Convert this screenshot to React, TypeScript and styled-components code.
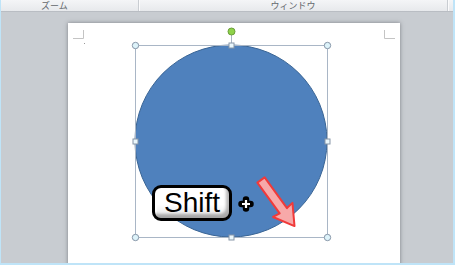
import React, { FC } from 'react';
import styled, { createGlobalStyle } from 'styled-components';

const GlobalStyle = createGlobalStyle`
  body {
    margin: 0;
    font-family: "Liberation Sans", "Noto Sans CJK JP", sans-serif;
  }
`;

const SFrame = styled.div`
  display: flex;
  flex-direction: column;
  width: 455px;
  height: 265px;
  padding: 0 2px 2px 1px;
  box-sizing: border-box;
  background: #bfe4f8;
  overflow: hidden;
`;

const STabBar = styled.div`
  display: flex;
  flex: 0 0 12px;
  height: 12px;
  background: linear-gradient(#f4f5f7, #e7e9ec);
  border-bottom: 1px solid #b9bdc3;
  box-sizing: border-box;
`;

const SGroup = styled.div<{ width: number; padLeft?: number }>`
  display: flex;
  align-items: center;
  justify-content: ${({ padLeft }) => (padLeft ? 'flex-start' : 'center')};
  width: ${({ width }) => width}px;
  padding-left: ${({ padLeft }) => padLeft || 0}px;
  box-sizing: border-box;
  border-right: 1px solid #c9cdd2;
  box-shadow: 1px 0 0 #fbfbfc;

  font-family: "Noto Sans CJK JP", sans-serif;
  font-size: 9px;
  line-height: 11px;
  color: #63676d;
`;

const SWorkspace = styled.div`
  flex: 1;
  padding: 11px 0 0 67px;
  background: #c8ccd1;
  overflow: hidden;
`;

const SSlide = styled.div`
  position: relative;
  width: 332px;
  height: 262px;
  background: #fff;
  box-shadow: 0 0 4px rgba(60, 64, 70, 0.55);

  > svg {
    display: block;
  }
`;

const SKey = styled.div`
  position: absolute;
  left: 84px;
  top: 162px;
  display: flex;
  align-items: center;
  justify-content: center;
  width: 80px;
  height: 36px;
  box-sizing: border-box;

  border: 3px solid #000;
  border-radius: 9px;
  background: linear-gradient(#ffffff 55%, #e4e4e4);
  box-shadow: inset -3px -4px 3px rgba(0, 0, 0, 0.28), inset 2px 2px 1px #fff;

  font-family: "Liberation Sans", Arial, sans-serif;
  font-size: 28px;
  line-height: 1;
  color: #000;
  padding-bottom: 1px;
`;

const corners: [number, number][] = [[67, 22], [259, 22], [67, 214], [259, 214]];
const sides: [number, number][] = [[163, 22], [163, 214], [67, 118], [259, 118]];

const Canvas: FC = () => (
  <svg width='332' height='262' viewBox='0 0 332 262'>
    {/* layout guides */}
    <path d='M5 15.5 H15.5 V7' fill='none' stroke='#c4c4c4' />
    <path d='M327 15.5 H316.5 V7' fill='none' stroke='#c4c4c4' />
    <rect x='16' y='20' width='1' height='1' fill='#999' />

    <circle cx='163' cy='118' r='96' fill='#4f81bd' stroke='#3a6595' strokeWidth='1' />

    {/* selection */}
    <rect x='67.5' y='22.5' width='192' height='192' fill='none' stroke='#a9b6c6' />
    <line x1='163.5' y1='11' x2='163.5' y2='20' stroke='#a9b6c6' />
    <circle cx='163.5' cy='8.5' r='3.5' fill='#8ed24a' stroke='#6b9e3a' />
    {corners.map(([x, y]) => (
      <circle key={`${x}-${y}`} cx={x + 0.5} cy={y + 0.5} r='3.2' fill='#ddf3fa' stroke='#8796a8' />
    ))}
    {sides.map(([x, y]) => (
      <rect key={`${x}-${y}`} x={x - 2} y={y - 2} width='5' height='5' fill='#eaf7fc' stroke='#8796a8' />
    ))}

    {/* plus */}
    <g transform='translate(178 181)'>
      <path d='M-4.5 0 H4.5 M0 -4.5 V4.5' stroke='#000' strokeWidth='6.5' strokeLinecap='round' />
      <path d='M-4 0 H4 M0 -4 V4' stroke='#fff' strokeWidth='2.2' />
    </g>

    {/* arrow */}
    <g transform='translate(193 157) rotate(54)'>
      <path
        d='M0 -4.5 L38 -4.5 L37 -12 L57 0 L37 12 L38 4.5 L0 4.5 Z'
        fill='#f7a9a9'
        stroke='#f03a3a'
        strokeWidth='2'
        strokeLinejoin='round'
      />
    </g>
  </svg>
);

const App: FC = () => (
  <>
    <GlobalStyle />
    <SFrame>
      <STabBar>
        <SGroup width={138} padLeft={40}>ズーム</SGroup>
        <SGroup width={309}>ウィンドウ</SGroup>
      </STabBar>
      <SWorkspace>
        <SSlide>
          <Canvas />
          <SKey>Shift</SKey>
        </SSlide>
      </SWorkspace>
    </SFrame>
  </>
);

export default App;
